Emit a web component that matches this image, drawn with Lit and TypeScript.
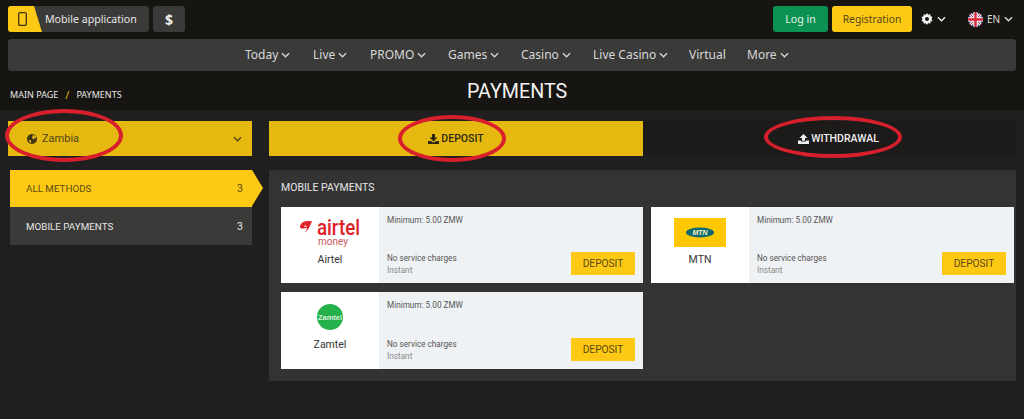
import { LitElement, html, css } from "lit";
import { customElement } from "lit/decorators.js";

const chev = html`<svg class="chev" viewBox="0 0 10 6" width="9" height="6"><path d="M1 1l4 4 4-4" fill="none" stroke="currentColor" stroke-width="1.4"/></svg>`;

const NAV: [string, number, boolean][] = [
  ["Today", 68, true], ["Live", 57, true], ["PROMO", 78, true], ["Games", 73, true],
  ["Casino", 72, true], ["Live Casino", 96, true], ["Virtual", 58, false], ["More", 60, true],
];

@customElement("app-root")
export class AppRoot extends LitElement {
  static styles = css`
    :host { display: block; position: relative; width: 1024px; height: 419px; overflow: hidden; background: #201f1f; font-family: "Roboto", sans-serif; }
    * { box-sizing: border-box; }
    .head { background: #161511; height: 110px; padding: 6px 8px 0; font-family: "Noto Sans", sans-serif; }
    .top { display: flex; align-items: center; height: 26px; }
    .mobile { width: 141px; height: 26px; background: #3a3a39; border-radius: 3px; display: flex; align-items: center; color: #e8e8e8; font-size: 10.6px; overflow: hidden; }
    .mobile .y { width: 34px; height: 26px; background: #fdc915; clip-path: polygon(0 0, 26px 0, 34px 100%, 0 100%); display: flex; align-items: center; padding-left: 10px; margin-right: 3px; }
    .dollar { width: 32px; height: 26px; margin-left: 4px; background: #3a3a39; border-radius: 3px; color: #eee; font-weight: 700; font-size: 14px; display: flex; align-items: center; justify-content: center; }
    .sp { flex: 1; }
    .login { width: 55px; height: 26px; margin-right: 4px; background: #0b9150; color: #e4f3ea; border-radius: 3px; font-size: 10.6px; display: flex; align-items: center; justify-content: center; }
    .reg { width: 80px; height: 26px; background: #fdc915; color: #554614; border-radius: 3px; font-size: 10.3px; display: flex; align-items: center; justify-content: center; }
    .gear { display: flex; align-items: center; gap: 4px; margin-left: 9px; color: #eee; width: 47px; }
    .lang { display: flex; align-items: center; gap: 4px; color: #ddd; font-size: 10px; width: 48px; }
    .nav { margin-top: 7px; height: 32px; background: #3a3a39; border-radius: 3px; display: flex; align-items: center; padding: 0 0 2px 237px; color: #d8d8d8; font-size: 12px; }
    .nav span { display: inline-flex; align-items: center; gap: 3px; }
    .nav .chev { margin-top: 1px; }
    .crumbtitle { position: relative; display: flex; align-items: center; height: 32px; margin-top: 5px; }
    .crumbs { margin-left: 2px; margin-top: 5px; font-size: 9px; color: #e8e8e8; display: flex; align-items: center; gap: 6px; }
    .crumbs i { color: #e6b820; font-style: normal; font-size: 11px; line-height: 11px; margin: 0 1px; }
    .title { position: absolute; left: 459px; top: 4px; font-family: "Roboto", sans-serif; font-size: 19.7px; color: #f2f2f2; }
    .tabsrow { display: flex; padding: 11px 8px 0; height: 46px; }
    .select { width: 244px; height: 35px; background: #e5b90f; color: #4e4318; display: flex; align-items: center; padding: 0 10px 0 19px; font-size: 11px; gap: 5px; }
    .select .sp { flex: 1; }
    .tab { height: 35px; width: 374px; display: flex; align-items: center; justify-content: center; font-size: 10.5px; font-weight: 500; gap: 2px; }
    .tab.dep { margin-left: 17px; background: #e5b90f; color: #2e2810; }
    .tab.wd { width: 373px; padding-left: 18px; background: #1c1b1a; color: #f0f0f0; }
    .main { display: flex; padding: 14px 8px 0; }
    .side { width: 244px; padding-left: 2px; }
    .mi { height: 38px; display: flex; align-items: center; justify-content: space-between; padding: 0 9px 0 16px; font-size: 9.8px; width: 242px; }
    .mi b { font-weight: 400; font-size: 10.5px; }
    .mi.on { position: relative; height: 37px; background: #fdc915; color: #5a4a12; }
    .mi.on::after { content: ""; position: absolute; left: 100%; top: 0; border-left: 11px solid #fdc915; border-top: 18.5px solid transparent; border-bottom: 18.5px solid transparent; }
    .mi.off { background: #3a3a39; color: #e6e6e6; }
    .panel { margin-left: 17px; width: 747px; height: 211px; background: #333333; padding: 11px 2px 0 12px; }
    .ptitle { font-size: 10.5px; color: #e6e6e6; height: 26px; line-height: 13px; }
    .grid { display: grid; grid-template-columns: 362px 363px; column-gap: 8px; row-gap: 9px; }
    .card { height: 76px; display: flex; background: #eff2f4; }
    .card.third { height: 77px; }
    .logo { width: 98px; background: #fff; display: flex; flex-direction: column; align-items: center; }
    .lg { height: 46px; display: flex; align-items: center; justify-content: center; padding-top: 4px; }
    .lg svg { flex: none; }
    .nm { font-size: 10.5px; color: #333; line-height: 14px; }
    .info { flex: 1; padding: 8px 8px 0; font-size: 8.2px; color: #555; display: flex; flex-direction: column; }
    .min { line-height: 11px; }
    .low { margin-top: auto; padding-bottom: 6px; display: flex; align-items: flex-end; justify-content: space-between; }
    .low .t { line-height: 11.5px; padding-bottom: 1px; }
    .low small { display: block; font-size: 8.2px; color: #8a8a8a; }
    .btn { width: 64px; height: 23px; margin-bottom: 2px; background: #fdc915; color: #5a4a12; font-size: 10.2px; display: flex; align-items: center; justify-content: center; }
    .ring { position: absolute; border: 4px solid #d8202c; border-radius: 50%; }
    .r1 { left: 5px; top: 109px; width: 118px; height: 53px; }
    .r2 { left: 398px; top: 115px; width: 108px; height: 47px; }
    .r3 { left: 764px; top: 116px; width: 138px; height: 42px; }
  `;

  card(name: string, logo: unknown, cls = "") {
    return html`<div class="card ${cls}">
      <div class="logo"><div class="lg">${logo}</div><div class="nm">${name}</div></div>
      <div class="info">
        <div class="min">Minimum: 5.00 ZMW</div>
        <div class="low">
          <div class="t">No service charges<small>Instant</small></div>
          <div class="btn">DEPOSIT</div>
        </div>
      </div>
    </div>`;
  }

  render() {
    const airtel = html`<svg width="64" height="44" viewBox="0 -4 64 44">
      <path d="M2 13c0-3 3-6 7-6 2 0 3 .5 5 0-1 3-3 8-7 12 1-2 2-4 2-5.500-2 1-7 2-7-.5z M6 12.500c1 .5 2 .5 3-.5-1-.8-3-.8-3 .5z" fill="#e0222b" fill-rule="evenodd"/>
      <text x="19" y="21" font-family="Roboto, sans-serif" font-weight="500" font-size="22" fill="#dd2229" textLength="43" lengthAdjust="spacingAndGlyphs">airtel</text>
      <text x="35" y="31" text-anchor="middle" font-family="Roboto, sans-serif" font-size="10" fill="#c9575c">money</text>
    </svg>`;
    const mtn = html`<svg width="52" height="29" viewBox="0 0 52 29">
      <rect width="52" height="29" fill="#fdc800"/>
      <ellipse cx="26" cy="14.500" rx="14" ry="5" fill="#0e6a70"/>
      <text x="26" y="17" text-anchor="middle" font-family="Liberation Sans, sans-serif" font-weight="700" font-style="italic" font-size="7" fill="#fdf3c0">MTN</text>
    </svg>`;
    const zamtel = html`<svg width="26" height="26" viewBox="0 0 26 26">
      <circle cx="13" cy="13" r="13" fill="#25b14b"/>
      <text x="13" y="15.500" text-anchor="middle" font-family="Liberation Sans, sans-serif" font-weight="700" font-size="7.500" fill="#d4f0da">Zamtel</text>
    </svg>`;
    return html`
      <div class="head">
        <div class="top">
          <div class="mobile">
            <div class="y"><svg width="9" height="14" viewBox="0 0 9 14"><rect x=".7" y=".7" width="7.600" height="12.600" rx="1.300" fill="none" stroke="#3b3212" stroke-width="1.300"/></svg></div>
            Mobile application
          </div>
          <div class="dollar">$</div>
          <div class="sp"></div>
          <div class="login">Log in</div>
          <div class="reg">Registration</div>
          <div class="gear">
            <svg width="12" height="12" viewBox="0 0 12 12"><path d="M6 0l1.200 1.700 2-.6.300 2.100 2 .8-1 1.900 1 2-2 .7-.3 2.100-2-.6L6 12l-1.200-1.800-2 .6-.3-2.100-2-.7 1-2-1-1.900 2-.8.300-2.100 2 .6z M6 4a2 2 0 100 4 2 2 0 000-4z" fill="#f2f2f2" fill-rule="evenodd"/></svg>
            ${chev}
          </div>
          <div class="lang">
            <svg width="15" height="15" viewBox="0 0 15 15"><defs><clipPath id="fl"><circle cx="7.500" cy="7.500" r="7.500"/></clipPath></defs>
              <g clip-path="url(#fl)"><rect width="15" height="15" fill="#3f4f9a"/><path d="M0 0l15 15M15 0L0 15" stroke="#eee" stroke-width="3"/><path d="M0 0l15 15M15 0L0 15" stroke="#d8293c" stroke-width="1"/><path d="M7.500 0v15M0 7.500h15" stroke="#eee" stroke-width="4.500"/><path d="M7.500 0v15M0 7.500h15" stroke="#d8293c" stroke-width="2.400"/></g></svg>
            EN ${chev}
          </div>
        </div>
        <div class="nav">
          ${NAV.map((n) => html`<span style="width:${n[1]}px">${n[0]}${n[2] ? chev : ""}</span>`)}
        </div>
        <div class="crumbtitle">
          <div class="crumbs"><span>MAIN PAGE</span><i>/</i><span>PAYMENTS</span></div>
          <div class="title">PAYMENTS</div>
        </div>
      </div>
      <div class="tabsrow">
        <div class="select">
          <svg width="10" height="10" viewBox="0 0 10 10"><circle cx="5" cy="5" r="5" fill="#3d3514"/><path d="M6 .6L9 2.500 8.500 4.500 7 4.300 6.300 5.500 5 4 5.500 2.500z M1.500 6.500L3.500 6 4.500 7.500 3.500 9z" fill="#e5b90f"/></svg>
          <span>Zambia</span>
          <span class="sp"></span>
          ${chev}
        </div>
        <div class="tab dep">
          <svg width="11" height="10" viewBox="0 0 11 10"><path d="M4 0h3v3.500h2.500L5.500 7.500 1.500 3.500H4z M0 7h3l1.500 1.300h2L8 7h3v3H0z" fill="#2e2810"/></svg>
          DEPOSIT
        </div>
        <div class="tab wd">
          <svg width="11" height="10" viewBox="0 0 11 10"><path d="M5.500 0l4 4H7v2.800H4V4H1.500z M0 6.500h3v1h5v-1h3V10H0z" fill="#f0f0f0"/></svg>
          WITHDRAWAL
        </div>
      </div>
      <div class="main">
        <div class="side">
          <div class="mi on"><span>ALL METHODS</span><b>3</b></div>
          <div class="mi off"><span>MOBILE PAYMENTS</span><b>3</b></div>
        </div>
        <div class="panel">
          <div class="ptitle">MOBILE PAYMENTS</div>
          <div class="grid">
            ${this.card("Airtel", airtel)}
            ${this.card("MTN", mtn)}
            ${this.card("Zamtel", zamtel, "third")}
          </div>
        </div>
      </div>
      <div class="ring r1"></div>
      <div class="ring r2"></div>
      <div class="ring r3"></div>
    `;
  }
}
